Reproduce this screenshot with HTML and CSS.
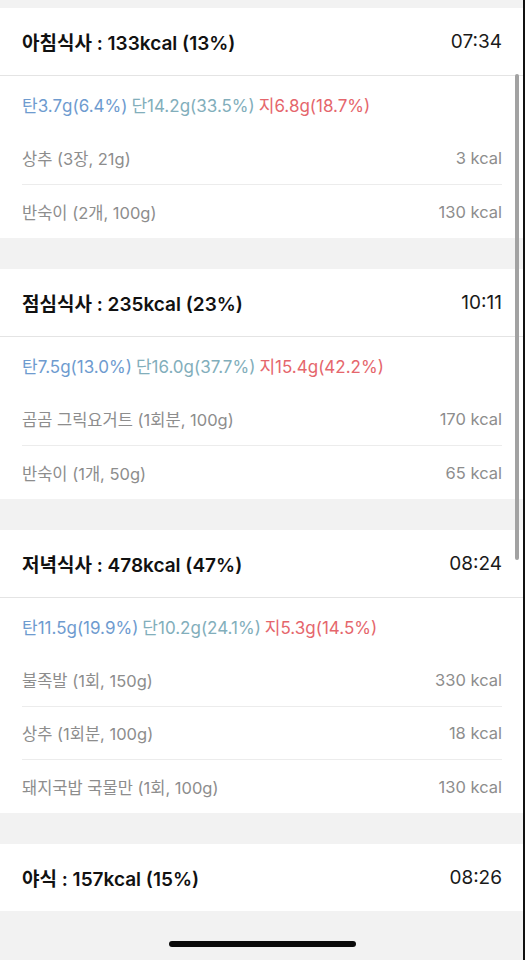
FILE: index.html
```html
<!DOCTYPE html>
<html lang="ko">
<head>
<meta charset="utf-8">
<link rel="stylesheet" href="styles.css">
</head>
<body>
<div class="screen">
  <section class="card">
    <div class="card-head"><span class="title">아침식사 : 133kcal (13%)</span><span class="time">07:34</span></div>
    <div class="macro"><span class="carb">탄3.7g(6.4%)</span> <span class="prot">단14.2g(33.5%)</span> <span class="fat">지6.8g(18.7%)</span></div>
    <div class="row"><span>상추 (3장, 21g)</span><span>3 kcal</span></div>
    <div class="row"><span>반숙이 (2개, 100g)</span><span>130 kcal</span></div>
  </section>
  <section class="card">
    <div class="card-head"><span class="title">점심식사 : 235kcal (23%)</span><span class="time">10:11</span></div>
    <div class="macro"><span class="carb">탄7.5g(13.0%)</span> <span class="prot">단16.0g(37.7%)</span> <span class="fat">지15.4g(42.2%)</span></div>
    <div class="row"><span>곰곰 그릭요거트 (1회분, 100g)</span><span>170 kcal</span></div>
    <div class="row"><span>반숙이 (1개, 50g)</span><span>65 kcal</span></div>
  </section>
  <section class="card">
    <div class="card-head"><span class="title">저녁식사 : 478kcal (47%)</span><span class="time">08:24</span></div>
    <div class="macro"><span class="carb">탄11.5g(19.9%)</span> <span class="prot">단10.2g(24.1%)</span> <span class="fat">지5.3g(14.5%)</span></div>
    <div class="row"><span>불족발 (1회, 150g)</span><span>330 kcal</span></div>
    <div class="row"><span>상추 (1회분, 100g)</span><span>18 kcal</span></div>
    <div class="row"><span>돼지국밥 국물만 (1회, 100g)</span><span>130 kcal</span></div>
  </section>
  <section class="card">
    <div class="card-head last"><span class="title">야식 : 157kcal (15%)</span><span class="time">08:26</span></div>
  </section>
  <div class="scrollbar"></div>
  <div class="home-indicator"></div>
</div>
</body>
</html>
```
FILE: styles.css
```css
* { box-sizing: border-box; }
html, body { margin: 0; padding: 0; }
body {
  background: #f2f2f2;
  font-family: Inter, "Noto Sans CJK KR", sans-serif;
  -webkit-font-smoothing: antialiased;
}
.screen {
  position: relative;
  width: 525px;
  height: 960px;
  padding-top: 8px;
  border-right: 2px solid #111;
  display: flex;
  flex-direction: column;
  gap: 31px;
  overflow: hidden;
}
.card {
  background: #fff;
  display: flex;
  flex-direction: column;
}
.card-head {
  height: 68px;
  padding: 0 21px 0 22px;
  border-bottom: 1px solid #e4e4e4;
  display: flex;
  align-items: center;
  justify-content: space-between;
  color: #111;
  font-size: 19px;
}
.card-head.last { height: 67px; border-bottom: none; }
.card-head .title { font-weight: 600; }
.card-head .time { font-size: 19px; color: #1a1a1a; }
.macro {
  height: 56px;
  padding: 0 22px;
  display: flex;
  align-items: center;
  gap: 4px;
  font-size: 17px;
}
.carb { color: #6e9bcf; }
.prot { color: #82aebb; }
.fat { color: #e5666c; }
.row {
  height: 53px;
  margin: 0 21px 0 22px;
  display: flex;
  align-items: center;
  justify-content: space-between;
  color: #8d8d8d;
  font-size: 16.5px;
  border-bottom: 1px solid #ececec;
}
.row:last-child { border-bottom: none; }
.scrollbar {
  position: absolute;
  left: 515px;
  top: 74px;
  width: 4px;
  height: 486px;
  border-radius: 2px;
  background: #a2a2a2;
}
.home-indicator {
  position: absolute;
  left: 169px;
  top: 941px;
  width: 187px;
  height: 6px;
  border-radius: 3px;
  background: #0a0a0a;
}
```
